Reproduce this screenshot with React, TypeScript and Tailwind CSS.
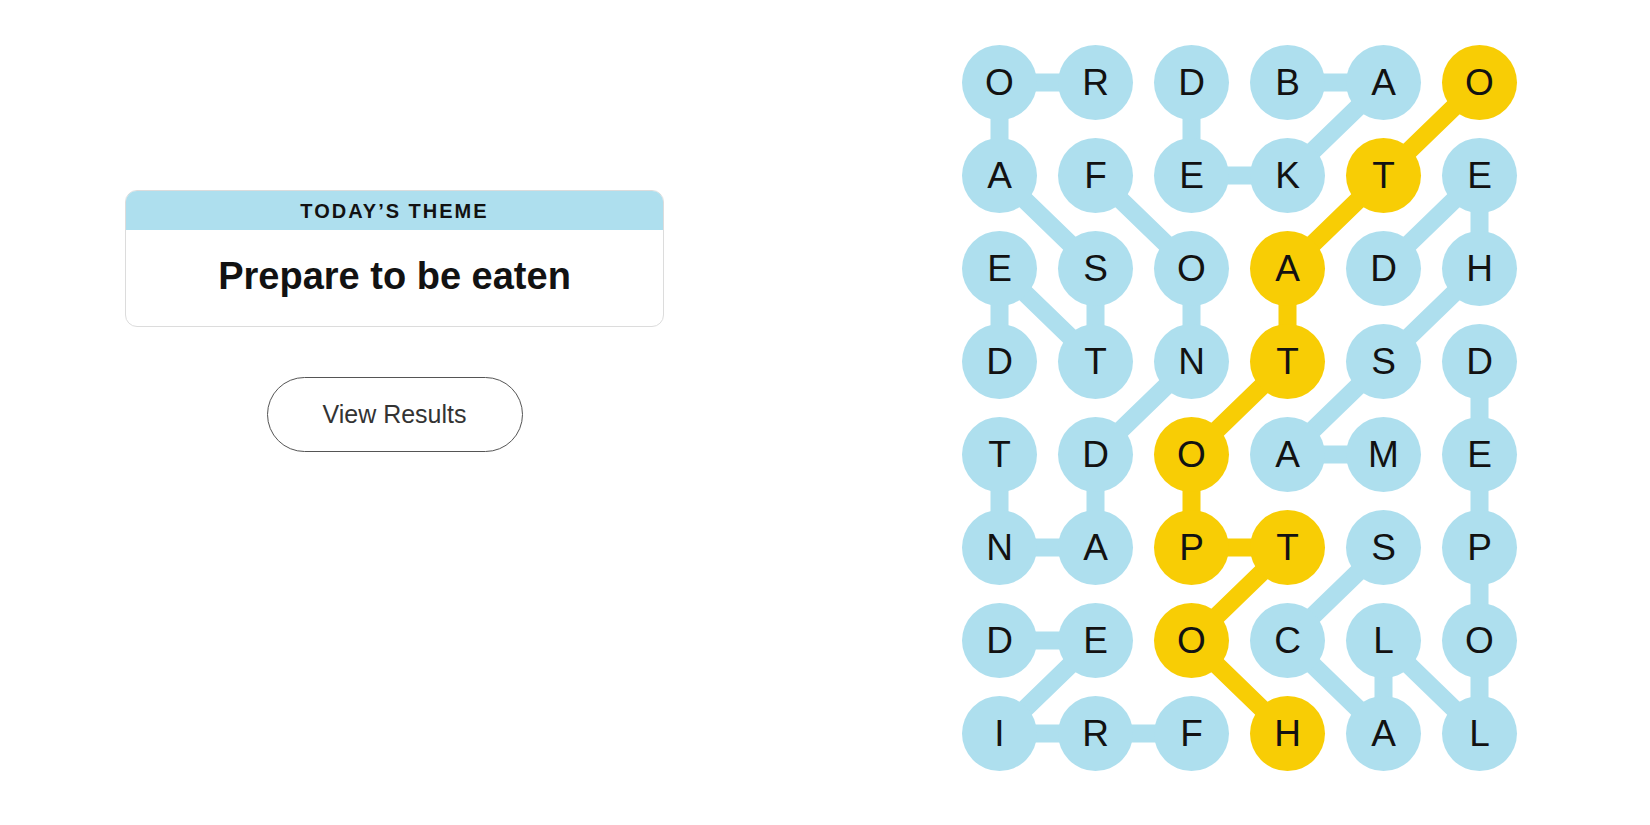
import React from 'react';

const BLUE = '#aedfee';
const YELLOW = '#f8cd05';

const letters = [
  'ORDBAO',
  'AFEKTE',
  'ESOADH',
  'DTNTSD',
  'TDOAME',
  'NAPTSP',
  'DEOCLO',
  'IRFHAL',
];

// [row, col] pairs
const spangram: [number, number][] = [
  [0, 5], [1, 4], [2, 3], [3, 3], [4, 2], [5, 2], [5, 3], [6, 2], [7, 3],
];

const words: [number, number][][] = [
  // BAKED
  [[0, 3], [0, 4], [1, 3], [1, 2], [0, 2]],
  // ROASTED
  [[0, 1], [0, 0], [1, 0], [2, 1], [3, 1], [2, 0], [3, 0]],
  // FONDANT
  [[1, 1], [2, 2], [3, 2], [4, 1], [5, 1], [5, 0], [4, 0]],
  // MASHED
  [[4, 4], [4, 3], [3, 4], [2, 5], [1, 5], [2, 4]],
  // SCALLOPED
  [[5, 4], [6, 3], [7, 4], [6, 4], [7, 5], [6, 5], [5, 5], [4, 5], [3, 5]],
  // FRIED
  [[7, 2], [7, 1], [7, 0], [6, 1], [6, 0]],
];

const cx = (c: number) => 37.5 + 96 * c;
const cy = (r: number) => 37.5 + 93 * r;

const isYellow = (r: number, c: number) => spangram.some(([a, b]) => a === r && b === c);

function Path({ cells, color }: { cells: [number, number][]; color: string }) {
  const pts = cells.map(([r, c]) => `${cx(c)},${cy(r)}`).join(' ');
  return <polyline points={pts} fill="none" stroke={color} strokeWidth={18} strokeLinejoin="round" strokeLinecap="round" />;
}

function Board() {
  return (
    <div className="relative w-[555px] h-[726px]">
      <svg className="absolute inset-0" width={555} height={726}>
        {words.map((w, i) => <Path key={i} cells={w} color={BLUE} />)}
        <Path cells={spangram} color={YELLOW} />
      </svg>
      <div className="relative grid grid-cols-[repeat(6,75px)] gap-x-[21px] gap-y-[18px]">
        {letters.map((row, r) =>
          row.split('').map((ch, c) => (
            <div
              key={`${r}-${c}`}
              className={`w-[75px] h-[75px] rounded-full flex items-center justify-center text-[37px] text-[#121212] ${isYellow(r, c) ? 'bg-[#f8cd05]' : 'bg-[#aedfee]'}`}
            >
              {ch}
            </div>
          ))
        )}
      </div>
    </div>
  );
}

export default function App() {
  return (
    <div className="w-full h-[825px] bg-white flex items-start pl-[125px]" style={{ fontFamily: '"Liberation Sans", Arial, sans-serif' }}>
      <div className="w-[539px] mt-[190px] flex flex-col">
        <div className="border border-[#dcdcdc] rounded-[12px] overflow-hidden">
          <div className="h-[39px] bg-[#aedfee] flex items-center justify-center text-[20px] font-bold tracking-[0.1em] text-[#121212]">
            TODAY’S THEME
          </div>
          <div className="h-[96px] flex items-center justify-center pb-[4px] text-[38px] font-bold text-[#121212]">
            Prepare to be eaten
          </div>
        </div>
        <button className="self-center mt-[50px] w-[256px] h-[75px] rounded-full border border-[#555555] text-[25px] text-[#333333] bg-white">
          View Results
        </button>
      </div>
      <div className="ml-[298px] mt-[45px]">
        <Board />
      </div>
    </div>
  );
}
